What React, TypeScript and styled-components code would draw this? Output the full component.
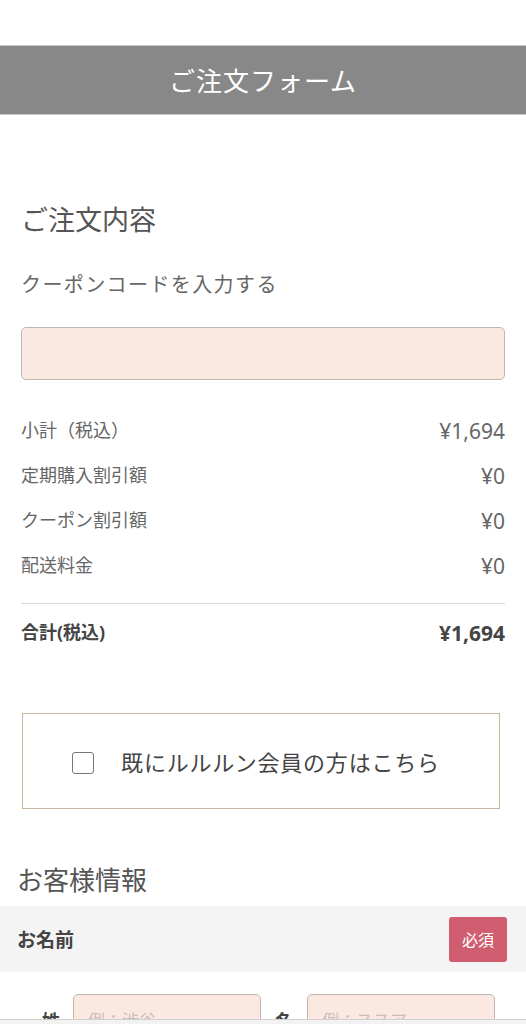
import React from "react";
import styled, { createGlobalStyle } from "styled-components";

const Global = createGlobalStyle`
  html, body { margin: 0; padding: 0; background: #fff; }
  body { font-family: "Noto Sans", "Noto Sans CJK JP", sans-serif; color: #555; }
  * { box-sizing: border-box; }
`;

const Page = styled.div`
  padding-top: 45px;
  padding-bottom: 40px;
`;

const Header = styled.header`
  height: 70px;
  background: #888888;
  border-top: 1px solid #c8c8c8;
  border-bottom: 1px solid #c8c8c8;
  display: flex;
  align-items: center;
  justify-content: center;
  color: #fff;
  font-size: 26px;
  letter-spacing: 1px;
`;

const Section = styled.section`
  padding: 0 21px;
`;

const Heading = styled.h2<{ $top: number; $indent?: number; $size?: number }>`
  margin: ${(p) => p.$top}px 0 0 ${(p) => p.$indent ?? 0}px;
  font-size: ${(p) => p.$size ?? 27}px;
  font-weight: 400;
  line-height: 40px;
  color: #555;
`;

const CouponLabel = styled.div`
  margin-top: 30px;
  font-size: 20px;
  letter-spacing: 1.4px;
  line-height: 30px;
  color: #666;
`;

const CouponInput = styled.input`
  display: block;
  width: 100%;
  height: 53px;
  margin-top: 27px;
  background: #fbe9e1;
  border: 1px solid #bdb6b2;
  border-radius: 5px;
  outline: none;
`;

const Rows = styled.div`
  margin-top: 36px;
  display: flex;
  flex-direction: column;
  gap: 15px;
`;

const Row = styled.div`
  display: flex;
  justify-content: space-between;
  align-items: center;
  height: 30px;
`;

const Label = styled.span<{ $bold?: boolean }>`
  font-size: 18px;
  color: ${(p) => (p.$bold ? "#444" : "#666")};
  font-weight: ${(p) => (p.$bold ? 700 : 400)};
  margin-top: -4px;
`;

const Value = styled.span<{ $bold?: boolean }>`
  font-size: 21px;
  color: ${(p) => (p.$bold ? "#444" : "#666")};
  font-weight: ${(p) => (p.$bold ? 700 : 400)};
`;

const Divider = styled.hr`
  margin: 22px 0 14px;
  border: 0;
  border-top: 1px solid #d8d8d8;
`;

const MemberBox = styled.label`
  margin: 65px 5px 0 1px;
  height: 96px;
  padding-right: 10px;
  border: 1px solid #c5b69c;
  display: flex;
  align-items: center;
  justify-content: center;
  gap: 27px;
  font-size: 22px;
  letter-spacing: 0.8px;
  color: #444;
  cursor: pointer;
`;

const Check = styled.span`
  width: 22px;
  height: 22px;
  border: 1.5px solid #777;
  border-radius: 3px;
  margin-top: 4px;
`;

const FieldBar = styled.div`
  margin-top: 6px;
  height: 66px;
  background: #f4f4f4;
  display: flex;
  align-items: center;
  justify-content: space-between;
  padding: 0 19px 0 17px;
`;

const FieldName = styled.span`
  font-size: 19px;
  font-weight: 700;
  color: #444;
`;

const Required = styled.span`
  width: 58px;
  height: 45px;
  background: #d05e70;
  border-radius: 3px;
  color: #fff;
  font-size: 16px;
  display: flex;
  align-items: center;
  justify-content: center;
`;

const NameRow = styled.div`
  display: grid;
  grid-template-columns: 31px 188px 46px 188px;
  align-items: center;
  padding: 22px 0 0 42px;
`;

const NameLabel = styled.span<{ $center?: boolean }>`
  font-size: 18px;
  font-weight: 700;
  color: #444;
  text-align: ${(p) => (p.$center ? "center" : "left")};
`;

const NameInput = styled.input`
  height: 52px;
  width: 100%;
  background: #fbe9e1;
  border: 1px solid #bdb6b2;
  border-radius: 5px;
  padding: 0 14px;
  font-size: 17px;
  font-family: inherit;
  &::placeholder { color: #c8c0bc; }
`;

const Footer = styled.div`
  position: fixed;
  left: 0;
  right: 0;
  bottom: 0;
  height: 5px;
  background: #f2f2f2;
  border-top: 1px solid #d0d0d0;
`;

const rows = [
  ["小計（税込）", "¥1,694"],
  ["定期購入割引額", "¥0"],
  ["クーポン割引額", "¥0"],
  ["配送料金", "¥0"],
];

export default function App() {
  return (
    <Page>
      <Global />
      <Header>ご注文フォーム</Header>
      <Section>
        <Heading $top={85}>ご注文内容</Heading>
        <CouponLabel>クーポンコードを入力する</CouponLabel>
        <CouponInput type="text" />
        <Rows>
          {rows.map(([l, v]) => (
            <Row key={l}>
              <Label>{l}</Label>
              <Value>{v}</Value>
            </Row>
          ))}
        </Rows>
        <Divider />
        <Row>
          <Label $bold>合計(税込)</Label>
          <Value $bold>¥1,694</Value>
        </Row>
        <MemberBox>
          <Check />
          <span>既にルルルン会員の方はこちら</span>
        </MemberBox>
      </Section>
      <Heading $top={51} $indent={17} $size={26}>お客様情報</Heading>
      <FieldBar>
        <FieldName>お名前</FieldName>
        <Required>必須</Required>
      </FieldBar>
      <NameRow>
        <NameLabel>姓</NameLabel>
        <NameInput placeholder="例：渋谷" />
        <NameLabel $center>名</NameLabel>
        <NameInput placeholder="例：ススア" />
      </NameRow>
      <Footer />
    </Page>
  );
}
